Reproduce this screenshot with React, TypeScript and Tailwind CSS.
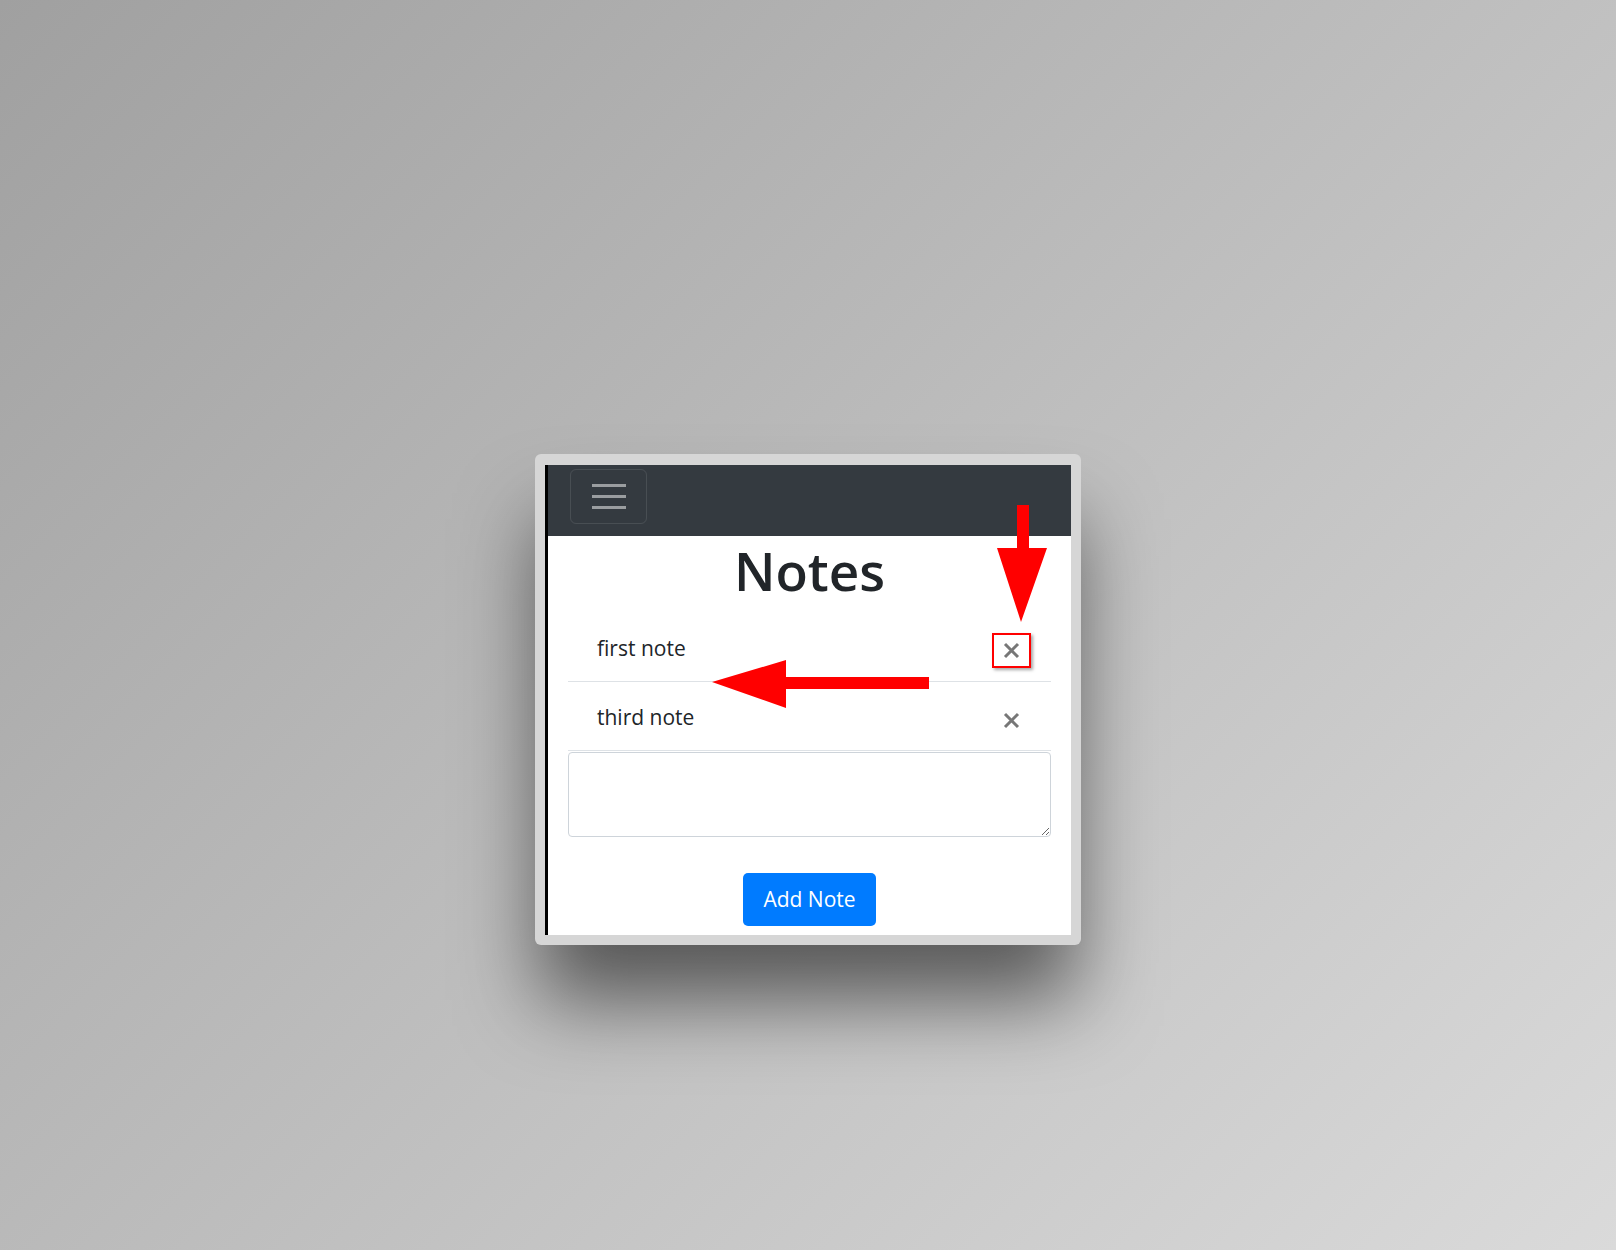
const notes = ['first note', 'third note'];

function CloseIcon() {
  return (
    <svg width="17" height="17" viewBox="0 0 17 17" className="text-[#777777]">
      <path d="M2 2 L15 15 M15 2 L2 15" stroke="currentColor" strokeWidth="3" strokeLinecap="butt" />
    </svg>
  );
}

export default function App() {
  return (
    <div
      className="relative w-full h-[1250px] overflow-hidden flex justify-center pt-[454px] bg-[linear-gradient(135deg,#a0a0a0_0%,#bdbdbd_50%,#dadada_100%)]"
      style={{ fontFamily: '"Open Sans", "Noto Sans", sans-serif' }}
    >
      {/* Window frame */}
      <div className="w-[546px] h-[491px] rounded-md bg-[#d6d6d6] pt-[11px] pl-[10px] pr-[10px] pb-[10px] shadow-[0_60px_80px_-5px_rgba(0,0,0,0.55)]">
        <div className="w-[526px] h-[470px] bg-white border-l-[3px] border-black flex flex-col overflow-hidden">
          {/* Navbar */}
          <div className="h-[71px] bg-[#343a40] flex items-start pl-[22px] pt-[4px] shrink-0">
            <button className="w-[77px] h-[55px] rounded-md border border-white/10 flex flex-col items-center justify-center gap-[8px]">
              <span className="block w-[34px] h-[3px] bg-white/50" />
              <span className="block w-[34px] h-[3px] bg-white/50" />
              <span className="block w-[34px] h-[3px] bg-white/50" />
            </button>
          </div>

          {/* Heading */}
          <h1 className="text-center text-[53px] leading-[64px] font-semibold text-[#212529] pt-[3px] mb-[10px]">Notes</h1>

          {/* List */}
          <div className="px-[20px] flex flex-col">
            {notes.map((note, i) => (
              <div key={note} className="h-[69px] border-b border-[#dee2e6] flex items-center justify-between pl-[29px] pr-[20px]">
                <span className="text-[21px] leading-[1.5] text-[#212529] mt-[4px]">{note}</span>
                {i === 0 ? (
                  <span className="w-[39px] h-[35px] border-2 border-[#ff0000] shadow-[2px_2px_3px_rgba(0,0,0,0.35)] flex items-center justify-center mt-[7px]">
                    <CloseIcon />
                  </span>
                ) : (
                  <span className="w-[39px] h-[35px] flex items-center justify-center mt-[8px]">
                    <CloseIcon />
                  </span>
                )}
              </div>
            ))}
            <textarea className="mt-[1px] h-[85px] w-full border border-[#ced4da] rounded-[4px] outline-none" />
            <div className="flex justify-center mt-[36px]">
              <button className="w-[133px] h-[53px] rounded-[5px] bg-[#007bff] text-white text-[21px]">Add Note</button>
            </div>
          </div>
        </div>
      </div>

      {/* Annotation arrows */}
      <svg className="absolute inset-0 pointer-events-none" width="1616" height="1250" viewBox="0 0 1616 1250">
        <polygon points="712,682 786,660 786,677 929,677 929,689 786,689 786,708" fill="#ff0000" />
        <polygon points="1017,505 1029,505 1029,548 1047,548 1021,622 997,548 1017,548" fill="#ff0000" />
      </svg>
    </div>
  );
}
